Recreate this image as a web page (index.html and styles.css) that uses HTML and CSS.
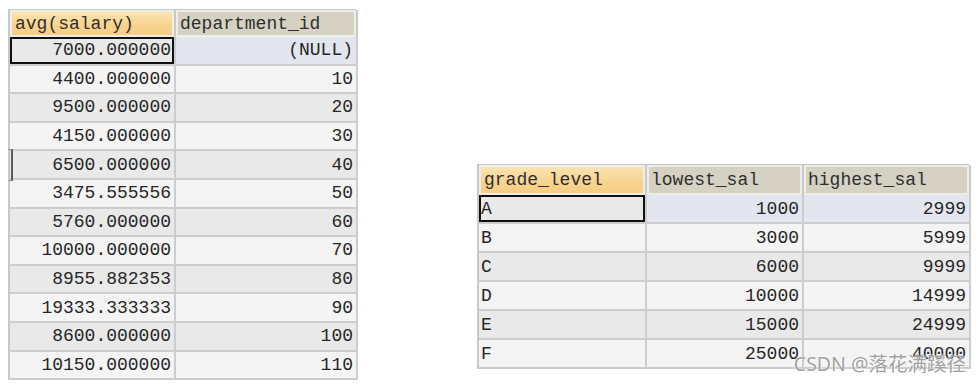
FILE: index.html
```html
<!DOCTYPE html>
<html>
<head>
<meta charset="utf-8">
<link rel="stylesheet" href="styles.css">
</head>
<body>
<div class="page">
  <div class="grid grid-left">
    <div class="hd sel">avg(salary)</div>
    <div class="hd">department_id</div>

    <div class="c num r0 focus">7000.000000</div><div class="c num r0 rowsel">(NULL)</div>
    <div class="c num r1">4400.000000</div><div class="c num r1">10</div>
    <div class="c num r0">9500.000000</div><div class="c num r0">20</div>
    <div class="c num r1">4150.000000</div><div class="c num r1">30</div>
    <div class="c num r0">6500.000000</div><div class="c num r0">40</div>
    <div class="c num r1">3475.555556</div><div class="c num r1">50</div>
    <div class="c num r0">5760.000000</div><div class="c num r0">60</div>
    <div class="c num r1">10000.000000</div><div class="c num r1">70</div>
    <div class="c num r0">8955.882353</div><div class="c num r0">80</div>
    <div class="c num r1">19333.333333</div><div class="c num r1">90</div>
    <div class="c num r0">8600.000000</div><div class="c num r0">100</div>
    <div class="c num r1">10150.000000</div><div class="c num r1">110</div>
    <span class="tick"></span>
  </div>

  <div class="grid grid-right">
    <div class="hd sel">grade_level</div>
    <div class="hd">lowest_sal</div>
    <div class="hd">highest_sal</div>

    <div class="c txt r0 focus">A</div><div class="c num r0 rowsel">1000</div><div class="c num r0 rowsel">2999</div>
    <div class="c txt r1">B</div><div class="c num r1">3000</div><div class="c num r1">5999</div>
    <div class="c txt r0">C</div><div class="c num r0">6000</div><div class="c num r0">9999</div>
    <div class="c txt r1">D</div><div class="c num r1">10000</div><div class="c num r1">14999</div>
    <div class="c txt r0">E</div><div class="c num r0">15000</div><div class="c num r0">24999</div>
    <div class="c txt r1">F</div><div class="c num r1">25000</div><div class="c num r1">40000</div>
    <span class="watermark">CSDN @落花满蹊径</span>
  </div>
</div>
</body>
</html>
```

FILE: styles.css
```css
* { box-sizing: border-box; }
html, body { margin: 0; padding: 0; background: #ffffff; }
body {
  width: 979px;
  height: 386px;
  overflow: hidden;
  font-family: "Liberation Mono", "Courier New", monospace;
  font-size: 18px;
  color: #262626;
}
.page {
  display: flex;
  align-items: flex-start;
  padding: 9px 0 0 8px;
}
.grid {
  position: relative;
  display: grid;
  border-top: 1px solid #c4c4c4;
  border-left: 2px solid #c8c8c8;
}
.grid-left {
  grid-template-columns: 166px 182px;
  grid-template-rows: 27px;
  grid-auto-rows: 28.6px;
  width: 348px;
}
.grid-right {
  margin-left: 121px;
  margin-top: 155px;
  grid-template-columns: 168px 157px 167px;
  grid-template-rows: 30px;
  grid-auto-rows: 29px;
  width: 492px;
}
.hd {
  display: flex;
  align-items: center;
  padding-left: 4px;
  background: #d5d2c3;
  box-shadow: inset 0 0 0 2px #eeede7;
  border-right: 2px solid #c9c9c9;
  white-space: nowrap;
  color: #2e2e2e;
}
.hd.sel {
  background: linear-gradient(180deg, #fbe5b6 0%, #f8d38e 60%, #f6cc80 100%);
  padding-left: 5px;
}
.c {
  display: flex;
  align-items: center;
  border-right: 2px solid #cdcdcd;
  border-bottom: 2px solid #cdcdcd;
  white-space: nowrap;
}
.num { justify-content: flex-end; padding-right: 3px; }
.txt { justify-content: flex-start; padding-left: 2px; }
.r0 { background: #e9e9e9; }
.r1 { background: #f4f4f4; }
.rowsel { background: #e3e6ef; }
.focus {
  background: #e9e9e9;
  box-shadow: inset 0 0 0 2px #111111;
}
.tick {
  position: absolute;
  left: -2px;
  top: 139px;
  width: 5px;
  height: 32px;
  border-right: 2px solid #5a5a5a;
  border-top: 1px solid #9a9a9a;
  border-bottom: 1px solid #9a9a9a;
}
.watermark {
  position: absolute;
  right: 3px;
  bottom: -8px;
  font-family: "Noto Sans", "Noto Sans CJK SC", sans-serif;
  font-size: 19.5px;
  color: rgba(135, 135, 135, 0.8);
  text-shadow: 0 0 2px #ffffff, 0 0 1px #ffffff;
  white-space: nowrap;
}
```
